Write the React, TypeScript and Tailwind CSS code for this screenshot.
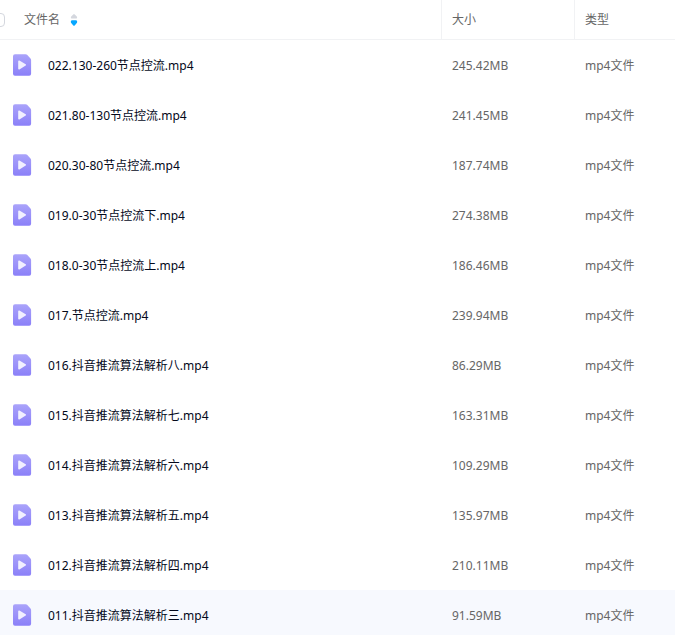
import { useState } from 'react';

type FileItem = {
  name: string;
  size: string;
};

const files: FileItem[] = [
  { name: '022.130-260节点控流.mp4', size: '245.42MB' },
  { name: '021.80-130节点控流.mp4', size: '241.45MB' },
  { name: '020.30-80节点控流.mp4', size: '187.74MB' },
  { name: '019.0-30节点控流下.mp4', size: '274.38MB' },
  { name: '018.0-30节点控流上.mp4', size: '186.46MB' },
  { name: '017.节点控流.mp4', size: '239.94MB' },
  { name: '016.抖音推流算法解析八.mp4', size: '86.29MB' },
  { name: '015.抖音推流算法解析七.mp4', size: '163.31MB' },
  { name: '014.抖音推流算法解析六.mp4', size: '109.29MB' },
  { name: '013.抖音推流算法解析五.mp4', size: '135.97MB' },
  { name: '012.抖音推流算法解析四.mp4', size: '210.11MB' },
  { name: '011.抖音推流算法解析三.mp4', size: '91.59MB' },
];

function VideoIcon() {
  return (
    <svg className="w-5 h-6 shrink-0" viewBox="0 0 20 24" aria-hidden="true">
      <defs>
        <linearGradient id="video-bg" x1="0" y1="0" x2="0" y2="1">
          <stop offset="0" stopColor="#aaa3fa" />
          <stop offset="1" stopColor="#8b80f8" />
        </linearGradient>
      </defs>
      <path
        d="M3 1.2h10.6c.6 0 1.1.2 1.5.6l3.4 3.6c.4.4.6.9.6 1.5v13.8a2 2 0 0 1-2 2H3a2 2 0 0 1-2-2V3.2a2 2 0 0 1 2-2z"
        fill="url(#video-bg)"
      />
      <path d="M6.2 8.200c0-.7.600-1 1.200-.7l6.300 3.800c.5.300.5 1 0 1.300l-6.300 3.800c-.6.300-1.200 0-1.200-.7z" fill="#f1f0ff" />
    </svg>
  );
}

function SortIcon() {
  return (
    <svg className="w-2 h-3" viewBox="0 0 8 12" aria-hidden="true">
      <path d="M3.3.4L1.2 2.600C.6 3.400.9 4.500 1.900 4.500h4.200c1 0 1.300-1.100.7-1.900L4.700.4a1 1 0 0 0-1.400 0z" fill="#d4d7de" />
      <path d="M3.300 11.400L1.200 9.100C.5 8.200.8 6.200 1.900 6.200h4.200c1.100 0 1.400 2 .7 2.900l-2.100 2.300a1 1 0 0 1-1.400 0z" fill="#06a7ff" />
    </svg>
  );
}

export default function App() {
  const [hovered, setHovered] = useState(files.length - 1);

  return (
    <div className="h-screen overflow-hidden bg-white font-['Noto_Sans','Noto_Sans_CJK_SC',sans-serif] text-xs text-[#666]">
      <table className="w-full table-fixed border-separate border-spacing-0 text-left">
        <colgroup>
          <col />
          <col className="w-[133px]" />
          <col className="w-[101px]" />
        </colgroup>
        <thead>
          <tr className="h-10">
            <th className="border-b border-[#f1f2f4] p-0 font-normal">
              <div className="flex items-center">
                <input
                  type="checkbox"
                  aria-label="全选"
                  className="-ml-[9px] h-[14px] w-[14px] appearance-none rounded border border-[#d4d7de] bg-white"
                />
                <button className="ml-[19px] flex items-center gap-[10px]">
                  文件名
                  <SortIcon />
                </button>
              </div>
            </th>
            <th className="border-b border-l border-[#f1f2f4] py-0 pr-0 pl-[10px] font-normal">大小</th>
            <th className="border-b border-l border-[#f1f2f4] py-0 pr-0 pl-[10px] font-normal">类型</th>
          </tr>
        </thead>
        <tbody>
          {files.map((file, index) => (
            <tr
              key={file.name}
              onMouseEnter={() => setHovered(index)}
              className={`h-[50px] ${hovered === index ? 'bg-[#f7f9fe]' : ''}`}
            >
              <td className="p-0 pl-3">
                <div className="flex items-center gap-4">
                  <VideoIcon />
                  <a href="#" className="truncate pt-[2px] text-[#03081a]">{file.name}</a>
                </div>
              </td>
              <td className="p-0 pt-[2px] pl-[11px]">{file.size}</td>
              <td className="p-0 pt-[2px] pl-[11px]">mp4文件</td>
            </tr>
          ))}
        </tbody>
      </table>
    </div>
  );
}
